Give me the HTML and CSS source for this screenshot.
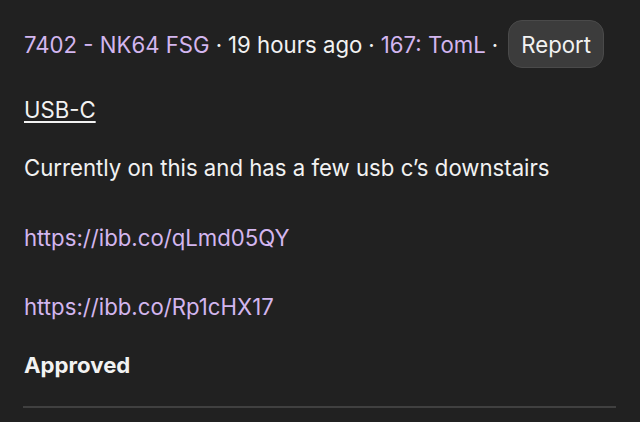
FILE: index.html
```html
<!DOCTYPE html>
<html lang="en">
<head>
<meta charset="utf-8">
<link rel="stylesheet" href="styles.css">
</head>
<body>
<div class="post">
  <div class="meta">
    <a class="link">7402 - NK64 FSG</a><span class="sep">·</span><span>19 hours ago</span><span class="sep">·</span><a class="link">167: TomL</a><span class="sep">·</span><button class="report">Report</button>
  </div>
  <div class="title">USB-C</div>
  <p class="body">Currently on this and has a few usb c’s downstairs</p>
  <p class="url"><a class="link">https://ibb.co/qLmd05QY</a></p>
  <p class="url"><a class="link">https://ibb.co/Rp1cHX17</a></p>
  <div class="status">Approved</div>
  <hr class="divider">
</div>
</body>
</html>
```
FILE: styles.css
```css
html, body {
  margin: 0;
  background: #212121;
}
body {
  font-family: Inter, "Noto Sans", sans-serif;
  color: #f2f2f2;
  font-size: 22.2px;
}
.post {
  padding: 20px 24px 0 24px;
  width: 592px;
}
.meta {
  display: flex;
  align-items: center;
  height: 48px;
  white-space: nowrap;
}
.link {
  color: #d3b6ef;
  text-decoration: none;
}
.sep {
  margin: 0 6px;
}
.report {
  font-family: inherit;
  font-size: 22.2px;
  color: #f2f2f2;
  background: #3c3c3c;
  border: 1px solid #4a4a4a;
  border-radius: 14px;
  height: 48px;
  padding: 0 12px;
  margin-left: 4px;
}
.title {
  margin-top: 27px;
  text-decoration: underline;
  text-underline-offset: 3px;
  line-height: 30px;
}
.body, .url {
  margin: 0;
  line-height: 30px;
}
.body { margin-top: 28px; }
.url { margin-top: 40px; }
.url + .url { margin-top: 39px; }
.status {
  margin-top: 28px;
  font-weight: 700;
  line-height: 30px;
}
.divider {
  margin: 26px 0 0 -1px;
  border: 0;
  height: 2px;
  background: #404040;
}
```
